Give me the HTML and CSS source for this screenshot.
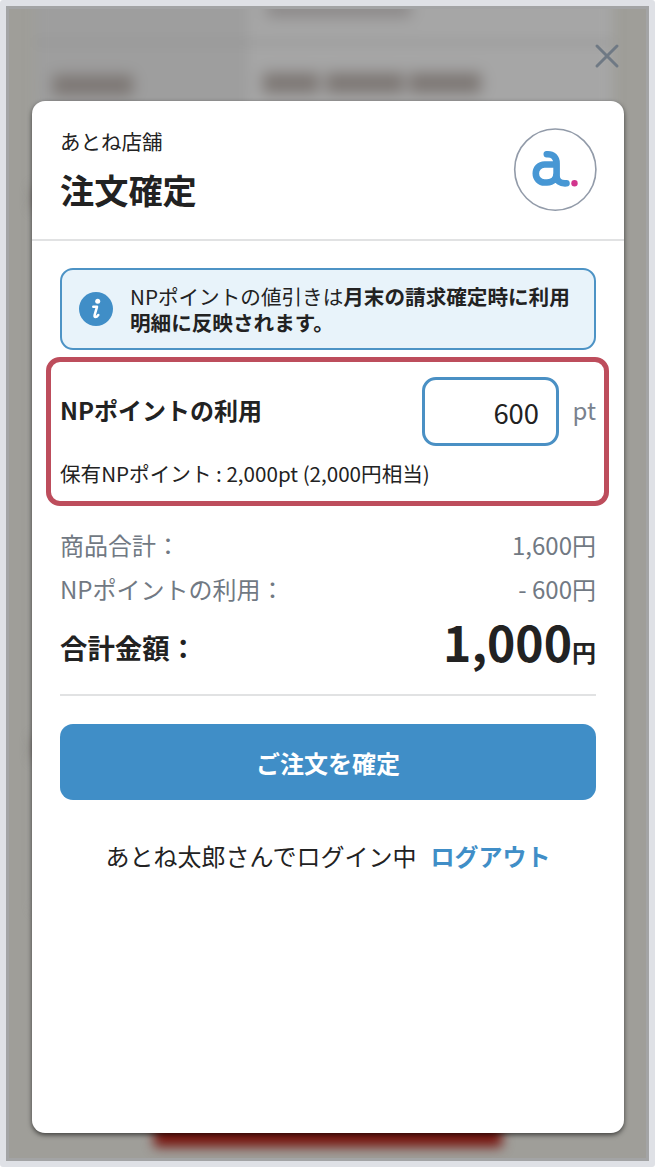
FILE: index.html
```
<!DOCTYPE html>
<html lang="ja">
<head>
    <meta charset="UTF-8">
    <meta name="viewport" content="width=device-width, initial-scale=1.0">
    <title>注文確定</title>
    <link rel="stylesheet" href="styles.css">
</head>
<body>
    <div class="screen">
        <!-- ぼかした背景ページ -->
        <div class="backdrop" aria-hidden="true">
            <div class="backdrop-table">
                <div class="backdrop-head"></div>
                <div class="backdrop-line"></div>
                <span class="smudge smudge-top"></span>
                <span class="smudge smudge-label"></span>
                <span class="smudge smudge-tel1"></span>
                <span class="smudge smudge-tel2"></span>
                <span class="smudge smudge-tel3"></span>
            </div>
            <span class="smudge smudge-side1"></span>
            <span class="smudge smudge-side2"></span>
            <div class="backdrop-button"></div>
        </div>

        <button class="close-button" aria-label="閉じる">
            <svg width="26" height="26" viewBox="0 0 26 26">
                <path d="M3 3L23 23M23 3L3 23" fill="none" stroke="#6f7984" stroke-width="3" stroke-linecap="round"/>
            </svg>
        </button>

        <div class="modal">
            <div class="modal-header">
                <div>
                    <div class="shop-name">あとね店舗</div>
                    <h1 class="modal-title">注文確定</h1>
                </div>
                <svg class="logo" width="84" height="84" viewBox="0 0 84 84">
                    <circle cx="42.300" cy="41.600" r="40.600" fill="#fff" stroke="#929ba9" stroke-width="1.6"/>
                    <path d="M33.800 26.300C40 25.800 43.600 29.500 43.600 35.500V48C43.600 53 47 55.800 53.500 55.300M43.600 36.500H31.500C26.500 36.500 22.800 40.500 22.800 45.500S26.500 54.500 31.500 54.500H34C40 54.500 43.600 50.500 43.600 45" fill="none" stroke="#4797d4" stroke-width="6.600" stroke-linecap="round" stroke-linejoin="round"/>
                    <circle cx="61.500" cy="55.300" r="3.200" fill="#d2358d"/>
                </svg>
            </div>

            <div class="modal-body">
                <div class="notice">
                    <svg class="notice-icon" width="34" height="34" viewBox="0 0 34 34">
                        <circle cx="17" cy="17" r="17" fill="#408ec7"/>
                        <circle cx="18.700" cy="9.300" r="2.500" fill="#fff"/>
                        <path d="M14.300 14.800H18L15.600 23.200C15.100 25.800 17.300 25.700 19.300 23" fill="none" stroke="#fff" stroke-width="2.500" stroke-linecap="round" stroke-linejoin="round"/>
                    </svg>
                    <p class="notice-text">NPポイントの値引きは<b>月末の請求確定時に利用<br>明細に反映されます。</b></p>
                </div>

                <!-- ポイント利用 -->
                <div class="point-box">
                    <div class="point-row">
                        <label class="point-label" for="point">NPポイントの利用</label>
                        <input class="point-input" type="text" id="point" value="600">
                        <span class="point-unit">pt</span>
                    </div>
                    <p class="point-note">保有NPポイント : 2,000pt (2,000円相当)</p>
                </div>

                <!-- 金額 -->
                <div class="summary">
                    <div class="summary-row">
                        <span>商品合計：</span>
                        <span>1,600円</span>
                    </div>
                    <div class="summary-row">
                        <span>NPポイントの利用：</span>
                        <span>- 600円</span>
                    </div>
                    <div class="summary-row total">
                        <span class="total-label">合計金額：</span>
                        <span class="total-price">1,000<small>円</small></span>
                    </div>
                </div>

                <button class="submit-button">ご注文を確定</button>

                <div class="login">
                    <span>あとね太郎さんでログイン中</span>
                    <a class="logout" href="#">ログアウト</a>
                </div>
            </div>
        </div>
    </div>
</body>
</html>
```

FILE: styles.css
```
* {
    box-sizing: border-box;
}
body {
    margin: 0;
    background-color: #fff;
    color: #222;
    font-family: "Noto Sans CJK JP", sans-serif;
}
h1, p {
    margin: 0;
}
.screen {
    position: relative;
    width: 655px;
    height: 1167px;
    padding: 95px 25px 0 26px;
    border: 6px solid #dfe1e6;
    border-top-width: 6px;
    border-radius: 3px;
    background-color: #a3a4a5;
    overflow: hidden;
}

/* 背景 */
.backdrop {
    position: absolute;
    top: 3px;
    left: 3px;
    right: 3px;
    bottom: 3px;
    background-color: #9f9e99;
    overflow: hidden;
}
.backdrop-table {
    position: absolute;
    top: -20px;
    left: 26px;
    width: 578px;
    height: 920px;
    background-color: #a6a6a6;
    filter: blur(6px);
}
.backdrop-head {
    width: 213px;
    height: 100%;
    background-color: #9e9e9e;
}
.backdrop-line {
    position: absolute;
    top: 52px;
    left: 0;
    width: 100%;
    height: 3px;
    background-color: #929292;
}
.smudge {
    position: absolute;
    height: 20px;
    background-color: #7c7673;
    filter: blur(4px);
}
.smudge-top {
    top: 12px;
    left: 232px;
    width: 144px;
    height: 16px;
    background-color: #8b8888;
}
.smudge-label {
    top: 86px;
    left: 18px;
    width: 80px;
}
.smudge-tel1 {
    top: 84px;
    left: 228px;
    width: 56px;
}
.smudge-tel2 {
    top: 84px;
    left: 291px;
    width: 78px;
}
.smudge-tel3 {
    top: 84px;
    left: 374px;
    width: 72px;
}
.smudge-side1,
.smudge-side2 {
    left: 24px;
    width: 20px;
    height: 22px;
    filter: blur(6px);
}
.smudge-side1 {
    top: 178px;
}
.smudge-side2 {
    top: 728px;
}
.backdrop-button {
    position: absolute;
    left: 145px;
    bottom: 11px;
    width: 348px;
    height: 50px;
    background-color: #761711;
    filter: blur(6px);
}
.close-button {
    position: absolute;
    top: 37px;
    right: 29px;
    padding: 0;
    border: none;
    background: none;
    cursor: pointer;
}
.close-button svg {
    display: block;
}

/* モーダル */
.modal {
    position: relative;
    width: 592px;
    height: 1032px;
    background-color: #fff;
    border-radius: 13px;
    box-shadow: 0 2px 5px rgba(0,0,0,0.6);
}
.modal-header {
    display: flex;
    justify-content: space-between;
    align-items: flex-start;
    height: 140px;
    padding: 26px 27px 0 28px;
    border-bottom: 2px solid #e1e2e3;
}
.shop-name {
    font-size: 20.5px;
    line-height: 29px;
}
.modal-title {
    margin-top: 8px;
    font-size: 34.2px;
    line-height: 50px;
}
.logo {
    margin-top: 1px;
}
.modal-body {
    padding: 27px 28px 0;
}
.notice {
    display: flex;
    align-items: center;
    height: 82px;
    padding: 0 17px;
    background-color: #e8f3fa;
    border: 2px solid #4d93c5;
    border-radius: 13px;
}
.notice-icon {
    flex: none;
    margin-right: 17px;
}
.notice-text {
    font-size: 20.6px;
    line-height: 26px;
    white-space: nowrap;
}

.point-box {
    height: 149px;
    margin: 7px -13px 0 -14px;
    padding: 15px 8px 0 9px;
    border: 5px solid #bd4d5c;
    border-radius: 14px;
}
.point-row {
    display: flex;
    align-items: center;
}
.point-label {
    flex: 1;
    padding-bottom: 4px;
    font-size: 24px;
    font-weight: bold;
}
.point-input {
    width: 137px;
    height: 69px;
    padding: 1px 17px 0;
    border: 3px solid #4a90c4;
    border-radius: 14px;
    color: #222;
    font-family: inherit;
    font-size: 27.4px;
    text-align: right;
}
.point-unit {
    width: 37px;
    padding-bottom: 4px;
    color: #7a828e;
    font-size: 24px;
    text-align: right;
}
.point-note {
    margin-top: 12px;
    font-size: 20.6px;
    line-height: 30px;
}

.summary {
    padding-top: 17px;
    border-bottom: 2px solid #e1e2e3;
}
.summary-row {
    display: flex;
    justify-content: space-between;
    color: #717983;
    font-size: 24px;
    line-height: 43px;
}
.summary-row + .summary-row {
    margin-top: 1px;
}
.summary-row.total {
    height: 83px;
    color: #222;
    font-weight: bold;
    line-height: 73px;
}
.total-label {
    font-size: 27.4px;
}
.total-price {
    font-size: 48px;
    line-height: 61px;
}
.total-price small {
    font-size: 24px;
}

.submit-button {
    display: block;
    width: 100%;
    height: 76px;
    margin-top: 28px;
    padding: 0;
    background-color: #408ec7;
    color: white;
    border: none;
    border-radius: 13px;
    font-family: inherit;
    font-size: 24px;
    font-weight: bold;
    cursor: pointer;
}
.login {
    display: flex;
    justify-content: center;
    gap: 14px;
    margin-top: 37px;
    font-size: 24px;
    line-height: 38px;
}
.logout {
    color: #408ec7;
    font-weight: bold;
    text-decoration: none;
}
```
